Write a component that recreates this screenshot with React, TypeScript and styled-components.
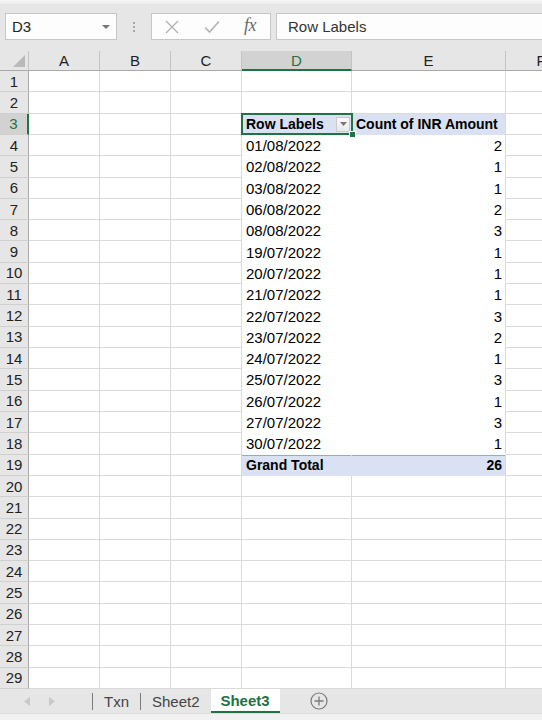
import React from 'react';
import styled, { createGlobalStyle, css } from 'styled-components';

const green = '#217346';
const grid = '#dadada';
const chrome = '#e6e6e6';

const GlobalStyle = createGlobalStyle`
  html, body {
    margin: 0;
    padding: 0;
    background: ${chrome};
  }
  body {
    font-family: 'Liberation Sans', Arial, sans-serif;
  }
`;

const columns = [
  { key: 'A', width: 71 },
  { key: 'B', width: 71 },
  { key: 'C', width: 71 },
  { key: 'D', width: 110 },
  { key: 'E', width: 154 },
  { key: 'F', width: 71 },
];

const pivotRows: [string, number][] = [
  ['01/08/2022', 2],
  ['02/08/2022', 1],
  ['03/08/2022', 1],
  ['06/08/2022', 2],
  ['08/08/2022', 3],
  ['19/07/2022', 1],
  ['20/07/2022', 1],
  ['21/07/2022', 1],
  ['22/07/2022', 3],
  ['23/07/2022', 2],
  ['24/07/2022', 1],
  ['25/07/2022', 3],
  ['26/07/2022', 1],
  ['27/07/2022', 3],
  ['30/07/2022', 1],
];

type Kind = 'plain' | 'head' | 'body' | 'total';

export default function App() {
  const rows = Array.from({ length: 29 }, (_, i) => i + 1);

  const renderCell = (row: number, col: string) => {
    const inPivot = col === 'D' || col === 'E';
    let kind: Kind = 'plain';
    let text: React.ReactNode = null;
    let align: 'left' | 'right' = 'left';

    if (inPivot && row === 3) {
      kind = 'head';
      text = col === 'D' ? 'Row Labels' : 'Count of INR Amount';
    } else if (inPivot && row >= 4 && row <= 18) {
      kind = 'body';
      const [date, count] = pivotRows[row - 4];
      text = col === 'D' ? date : count;
      align = col === 'D' ? 'left' : 'right';
    } else if (inPivot && row === 19) {
      kind = 'total';
      text = col === 'D' ? 'Grand Total' : 26;
      align = col === 'D' ? 'left' : 'right';
    }

    if (row === 3 && col === 'D') {
      return (
        <ActiveCell key={col} $kind={kind} $col={col}>
          <CellText>{text}</CellText>
          <FilterButton>
            <svg width="7" height="4" viewBox="0 0 7 4">
              <path d="M0 0h7L3.5 4z" fill="#777" />
            </svg>
          </FilterButton>
        </ActiveCell>
      );
    }

    return (
      <Cell key={col} $kind={kind} $col={col} $align={align}>
        {text}
      </Cell>
    );
  };

  return (
    <Window>
      <GlobalStyle />
      <TopStrip />
      <FormulaBar>
        <NameBox>
          <span>D3</span>
          <svg width="8" height="4" viewBox="0 0 8 4">
            <path d="M0 0h8L4 4z" fill="#777" />
          </svg>
        </NameBox>
        <Grip>
          <i />
          <i />
          <i />
        </Grip>
        <FormulaTools>
          <svg width="14" height="14" viewBox="0 0 14 14">
            <path d="M1 1l12 12M13 1L1 13" stroke="#b4b4b4" strokeWidth="1.4" fill="none" />
          </svg>
          <svg width="16" height="14" viewBox="0 0 16 14">
            <path d="M1 7.5l4.5 4.5L15 1.5" stroke="#b4b4b4" strokeWidth="1.6" fill="none" />
          </svg>
          <Fx>fx</Fx>
        </FormulaTools>
        <FormulaInput>Row Labels</FormulaInput>
      </FormulaBar>

      <Sheet>
        <Corner>
          <svg width="12" height="12" viewBox="0 0 12 12">
            <path d="M12 0v12H0z" fill="#b9b9b9" />
          </svg>
        </Corner>
        {columns.map((c) => (
          <ColHeader key={c.key} $active={c.key === 'D'}>
            {c.key}
          </ColHeader>
        ))}
        {rows.map((r) => (
          <React.Fragment key={r}>
            <RowHeader $active={r === 3}>{r}</RowHeader>
            {columns.map((c) => renderCell(r, c.key))}
          </React.Fragment>
        ))}
      </Sheet>

      <TabBar>
        <TabRow>
          <Nav>
            <svg width="6" height="9" viewBox="0 0 6 9">
              <path d="M6 0v9L0 4.5z" fill="#c8c8c8" />
            </svg>
            <svg width="6" height="9" viewBox="0 0 6 9">
              <path d="M0 0v9l6-4.5z" fill="#c8c8c8" />
            </svg>
          </Nav>
          <TabDivider />
          <Tab>Txn</Tab>
          <TabDivider />
          <Tab>Sheet2</Tab>
          <Tab $active>Sheet3</Tab>
          <AddSheet>
            <svg width="18" height="18" viewBox="0 0 18 18">
              <circle cx="9" cy="9" r="8" stroke="#7a7a7a" strokeWidth="1.2" fill="none" />
              <path d="M9 4.5v9M4.5 9h9" stroke="#7a7a7a" strokeWidth="1.3" />
            </svg>
          </AddSheet>
        </TabRow>
        <StatusStrip />
      </TabBar>
    </Window>
  );
}

const Window = styled.div`
  width: 542px;
  height: 720px;
  overflow: hidden;
  background: ${chrome};
  display: flex;
  flex-direction: column;
`;

const TopStrip = styled.div`
  height: 4px;
  background: linear-gradient(#f6f6f6, #ececec);
  flex-shrink: 0;
`;

const FormulaBar = styled.div`
  height: 47px;
  flex-shrink: 0;
  display: flex;
  align-items: flex-start;
  padding: 9px 0 0 5px;
  box-sizing: border-box;
`;

const boxBase = css`
  height: 27px;
  box-sizing: border-box;
  background: #fdfdfd;
  border: 1px solid #c6c6c6;
  display: flex;
  align-items: center;
`;

const NameBox = styled.div`
  ${boxBase};
  width: 112px;
  justify-content: space-between;
  padding: 0 6px 0 6px;
  font-size: 15px;
  color: #222;
`;

const Grip = styled.div`
  width: 34px;
  height: 27px;
  display: flex;
  flex-direction: column;
  align-items: center;
  justify-content: center;
  gap: 2px;

  i {
    width: 2px;
    height: 2px;
    background: #a8a8a8;
  }
`;

const FormulaTools = styled.div`
  ${boxBase};
  width: 120px;
  padding: 0 14px 0 13px;
  justify-content: space-between;
`;

const Fx = styled.span`
  font-family: 'Liberation Serif', 'DejaVu Serif', serif;
  font-style: italic;
  font-size: 18px;
  color: #6a6a6a;
  letter-spacing: -0.5px;
  margin-top: -3px;
`;

const FormulaInput = styled.div`
  ${boxBase};
  flex: 1;
  margin-left: 5px;
  padding-left: 11px;
  font-size: 15px;
  color: #333;
  border-right: none;
`;

const Sheet = styled.div`
  height: 638px;
  flex-shrink: 0;
  display: grid;
  grid-template-columns: 29px ${columns.map((c) => `${c.width}px`).join(' ')};
  grid-template-rows: 20px repeat(29, 1fr);
  background: #fff;
  font-size: 15px;
  color: #000;
`;

const Corner = styled.div`
  background: ${chrome};
  border-right: 1px solid #c3c3c3;
  border-bottom: 1px solid #a9a9a9;
  display: flex;
  align-items: flex-end;
  justify-content: flex-end;
  padding: 0 3px 3px 0;
`;

const ColHeader = styled.div<{ $active?: boolean }>`
  background: ${(p) => (p.$active ? '#d2d2d2' : chrome)};
  color: ${(p) => (p.$active ? green : '#222')};
  border-right: 1px solid #c3c3c3;
  border-bottom: ${(p) => (p.$active ? `2px solid ${green}` : '1px solid #a9a9a9')};
  display: flex;
  align-items: center;
  justify-content: center;
  font-size: 15px;
  box-sizing: border-box;
`;

const RowHeader = styled.div<{ $active?: boolean }>`
  background: ${(p) => (p.$active ? '#d2d2d2' : chrome)};
  color: ${(p) => (p.$active ? green : '#222')};
  border-right: ${(p) => (p.$active ? `2px solid ${green}` : '1px solid #a9a9a9')};
  border-bottom: 1px solid #d0d0d0;
  display: flex;
  align-items: center;
  justify-content: center;
  font-size: 15px;
  box-sizing: border-box;
`;

const Cell = styled.div<{ $kind: Kind; $col: string; $align?: 'left' | 'right' }>`
  box-sizing: border-box;
  display: flex;
  align-items: center;
  justify-content: ${(p) => (p.$align === 'right' ? 'flex-end' : 'flex-start')};
  padding: 1px 3px 0 4px;
  white-space: nowrap;
  overflow: visible;
  border-right: 1px solid ${grid};
  border-bottom: 1px solid ${grid};

  ${(p) =>
    (p.$kind === 'body' || p.$kind === 'head') &&
    css`
      border-bottom-color: transparent;
      border-right-color: ${p.$col === 'D' ? 'transparent' : grid};
    `}

  ${(p) =>
    p.$kind === 'head' &&
    css`
      background: #d9e1f2;
      font-weight: bold;
      font-size: 14px;
      border-right-color: ${p.$col === 'D' ? '#d9e1f2' : grid};
    `}

  ${(p) =>
    p.$kind === 'total' &&
    css`
      background: #d9e1f2;
      font-weight: bold;
      font-size: 14px;
      box-shadow: inset 0 1px 0 #8ea9db;
      border-bottom-color: #d9e1f2;
      border-right-color: ${p.$col === 'D' ? '#d9e1f2' : grid};
    `}
`;

const ActiveCell = styled(Cell)`
  position: relative;
  justify-content: space-between;
  padding-right: 1px;

  &::after {
    content: '';
    position: absolute;
    left: -1px;
    top: -1px;
    right: -2px;
    bottom: -1px;
    border: 2px solid ${green};
    pointer-events: none;
  }

  &::before {
    content: '';
    position: absolute;
    right: -5px;
    bottom: -4px;
    width: 5px;
    height: 5px;
    background: ${green};
    border: 1px solid #fff;
    z-index: 2;
  }
`;

const CellText = styled.span`
  white-space: nowrap;
`;

const FilterButton = styled.div`
  width: 14px;
  height: 15px;
  box-sizing: border-box;
  border: 1px solid #c9c9c9;
  background: linear-gradient(#fbfbfb, #e9e9e9);
  display: flex;
  align-items: center;
  justify-content: center;
`;

const TabBar = styled.div`
  flex: 1;
  display: flex;
  flex-direction: column;
  background: ${chrome};
`;

const TabRow = styled.div`
  height: 24px;
  display: flex;
  align-items: stretch;
`;

const Nav = styled.div`
  width: 92px;
  display: flex;
  align-items: center;
  gap: 19px;
  padding-left: 24px;
  box-sizing: border-box;
`;

const TabDivider = styled.div`
  width: 1px;
  margin: 4px 0 3px;
  background: #7c7c7c;
`;

const Tab = styled.div<{ $active?: boolean }>`
  display: flex;
  align-items: center;
  padding: 0 ${(p) => (p.$active ? '0' : '11px')};
  font-size: 15px;
  color: ${(p) => (p.$active ? green : '#444')};
  font-weight: ${(p) => (p.$active ? 'bold' : 'normal')};
  background: ${(p) => (p.$active ? '#fff' : 'transparent')};
  border-bottom: ${(p) => (p.$active ? `2px solid ${green}` : 'none')};
  box-sizing: border-box;
  ${(p) =>
    p.$active &&
    css`
      width: 69px;
      justify-content: center;
    `}
`;

const AddSheet = styled.div`
  display: flex;
  align-items: center;
  margin-left: 30px;
`;

const StatusStrip = styled.div`
  flex: 1;
  background: #f1f1f1;
  border-top: 1px solid #dcdcdc;
`;
